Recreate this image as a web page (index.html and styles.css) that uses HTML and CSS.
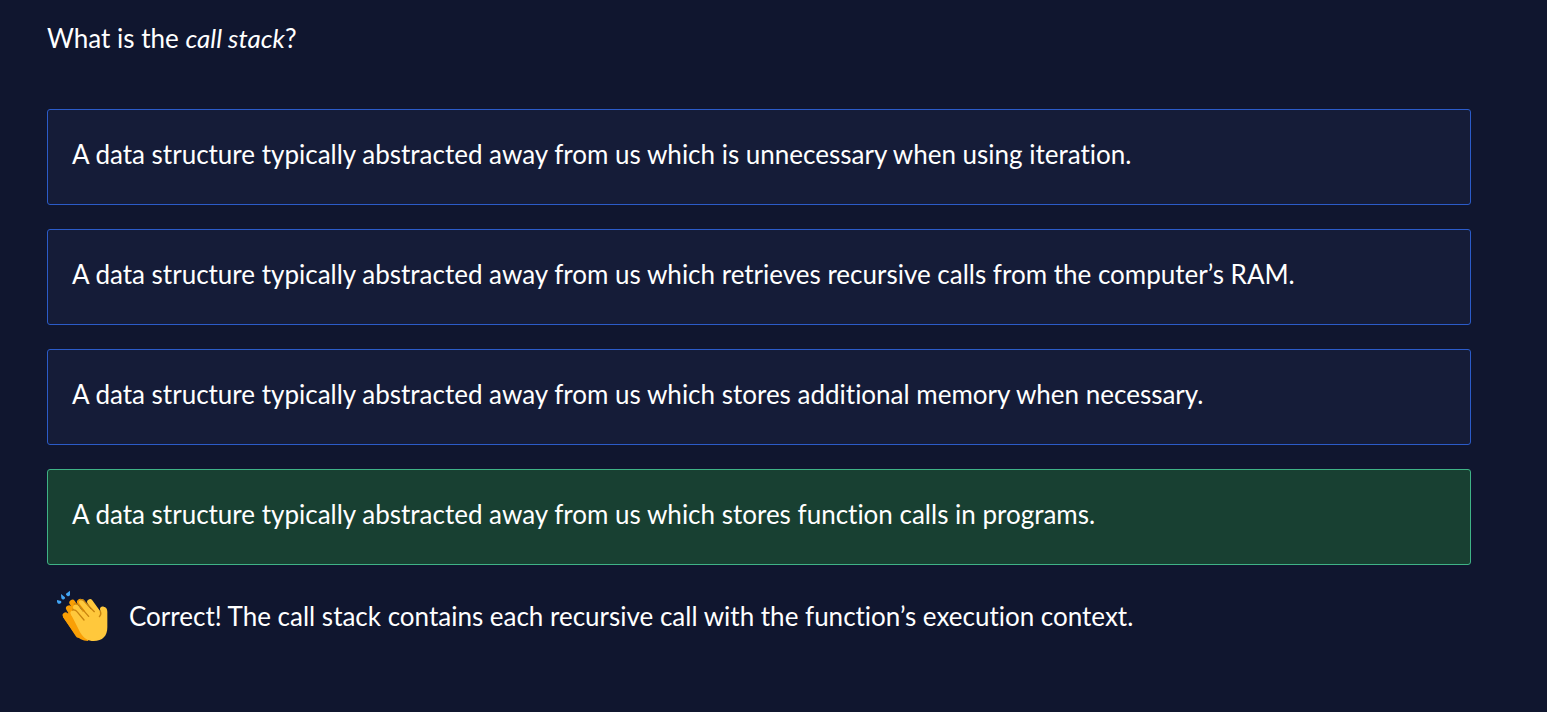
FILE: index.html
```html
<!DOCTYPE html>
<html lang="en">
<head>
<meta charset="utf-8">
<meta name="viewport" content="width=device-width, initial-scale=1">
<title>Call stack quiz</title>
<link rel="stylesheet" href="styles.css">
</head>
<body>
<main class="quiz">
  <h1 class="question">What is the <em>call stack</em>?</h1>
  <div class="options">
    <button type="button" class="option">A data structure typically abstracted away from us which is unnecessary when using iteration.</button>
    <button type="button" class="option">A data structure typically abstracted away from us which retrieves recursive calls from the computer’s RAM.</button>
    <button type="button" class="option">A data structure typically abstracted away from us which stores additional memory when necessary.</button>
    <button type="button" class="option option-correct">A data structure typically abstracted away from us which stores function calls in programs.</button>
  </div>
  <div class="feedback" role="status">
    <svg class="clap" viewBox="30 12 165 162" aria-hidden="true">
      <g fill="#42a5f5">
        <path d="M36 45l12 3q3 4-1 7-5 3-9 0-3-4-2-10z"/>
        <path d="M48 27l12 10q1 4-3 6-5 2-8-3z"/>
        <path d="M75 17v13q-3 5-8 3-5-3-4-7z"/>
      </g>
      <g fill="none" stroke="#f99f06" stroke-linecap="round" stroke-linejoin="round">
        <path stroke-width="18" d="M62 91l38 58M72 70l35 60M82 53l40 60M105 51l20 30"/>
      </g>
      <path fill="#f99f06" d="M54 97l38 53q12 17 37 18l10-30-60-60z"/>
      <g fill="none" stroke="#ffc83c" stroke-linecap="round" stroke-linejoin="round">
        <path stroke-width="17" d="M85 84l30 42M93 67l38 50M111 52l40 52M135 51l32 44"/>
      </g>
      <path fill="#ffc83c" d="M79 90l23-6 50-15c3 8 9 17 15 21 3-3 1-8-1-13-3-9 3-13 10-12 7 1 11 6 11 15v47c0 26-14 41-41 41-17 0-29-8-40-25z"/>
      <g fill="none" stroke="#c9840f" stroke-width="4" stroke-linecap="round" stroke-linejoin="round">
        <path d="M83 75q8-2 13 5l21 25"/>
        <path d="M88 57q9-2 15 5l28 32"/>
        <path d="M106 44q9-1 13 6l29 30"/>
        <path d="M163 95q7-6 3-16"/>
      </g>
    </svg>
    <p class="feedback-text">Correct! The call stack contains each recursive call with the function’s execution context.</p>
  </div>
</main>
</body>
</html>
```
FILE: styles.css
```css
* {
  box-sizing: border-box;
}

body {
  margin: 0;
  background: #10162f;
  color: #fff;
  font: 26px/40px Lato, "Liberation Sans", sans-serif;
  font-variant-ligatures: none;
}

.quiz {
  padding: 18px 76px 48px 47px;
}

.question {
  margin: 0 0 51px;
  font: inherit;
}

.options {
  display: grid;
  gap: 24px;
}

.option {
  min-height: 96px;
  padding: 24px 24px 30px;
  border: 1px solid #2b5bc8;
  border-radius: 3px;
  background: #151c38;
  color: inherit;
  font: inherit;
  font-variant-ligatures: inherit;
  text-align: left;
  cursor: pointer;
}

.option-correct {
  border-color: #3fb286;
  background: #184032;
}

.feedback {
  display: flex;
  align-items: center;
  gap: 19px;
  margin-top: 24px;
  padding-left: 8px;
}

.clap {
  flex: none;
  width: 55px;
  height: 54px;
}

.feedback-text {
  margin: 0;
}
```
